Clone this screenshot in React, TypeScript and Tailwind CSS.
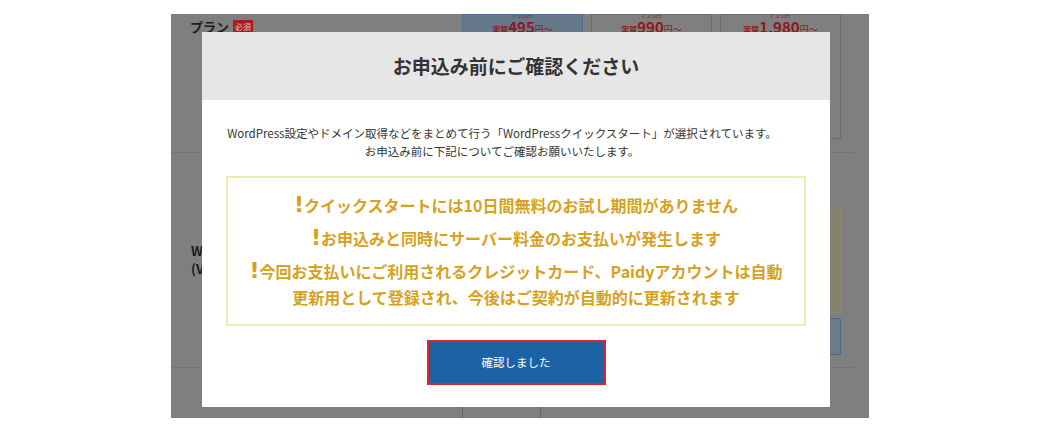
import React from "react";

const notices = [
    ["クイックスタートには10日間無料のお試し期間がありません"],
    ["お申込みと同時にサーバー料金のお支払いが発生します"],
    ["今回お支払いにご利用されるクレジットカード、Paidyアカウントは自動", "更新用として登録され、今後はご契約が自動的に更新されます"],
];

const plans = [
    { price: "495", selected: true },
    { price: "990", selected: false },
    { price: "1,980", selected: false },
];

function PlanCard({ price, selected }: { price: string; selected: boolean }) {
    return (
        <div
            className={`flex h-[125px] w-[121px] flex-col items-center overflow-hidden border ${
                selected ? "border-[#4d6d93] bg-[#66778a]" : "border-[#6c6c6c] bg-[#7f7f7f]"
            }`}
        >
            <div className="h-[4px] overflow-hidden">
                <p className="-mt-[8px] text-[10px] leading-[12px] text-[#8e3030]">・・ 月額 ・・</p>
            </div>
            <p className="flex items-baseline text-[#921818]">
                <span className="text-[8px] font-bold">実質</span>
                <span className="text-[15px] font-bold leading-[16px]">{price}</span>
                <span className="text-[9px]">円～</span>
            </p>
        </div>
    );
}

export default function App() {
    return (
        <div className="h-[432px] w-[1037px] bg-white pl-[171px] pt-[14px] font-['Noto_Sans_CJK_JP','Noto_Sans',sans-serif]">
            <div className="relative h-[404px] w-[698px] overflow-hidden bg-[#7f7f7f]">
                {/* page behind the dialog */}
                <div className="flex flex-col">
                    <div className="flex">
                        <div className="flex w-[291px] items-start gap-[4px] pl-[19px] pt-[6px]">
                            <span className="text-[13px] font-bold leading-[14px] text-[#1e1e1e]">プラン</span>
                            <span className="bg-[#a81c1c] px-[2px] text-[8px] leading-[13px] text-[#e0c4c4]">必須</span>
                        </div>
                        <div className="flex gap-[8px]">
                            {plans.map((plan) => (
                                <PlanCard key={plan.price} price={plan.price} selected={plan.selected} />
                            ))}
                        </div>
                    </div>
                    <div className="mt-[13px] h-px w-[683px] bg-[#737373]" />
                    <div className="flex h-[214px]">
                        <div className="ml-[20px] mt-[89px] w-[11px] overflow-hidden whitespace-nowrap text-[13px] font-bold leading-[18px] text-[#1a1a1a]">
                            <p>W</p>
                            <p>(V</p>
                        </div>
                        <div className="ml-auto mr-[28px] flex w-[300px] flex-col pt-[56px]">
                            <div className="h-[104px] border border-[#8b896b] bg-[#84826f]" />
                            <div className="mt-[5px] h-[37px] rounded-[2px] border border-[#46668f] bg-[#6e7a88]" />
                        </div>
                    </div>
                    <div className="h-px w-[683px] bg-[#737373]" />
                    <div className="ml-[291px] mt-[38px] h-[14px] w-[79px] rounded-[2px] border border-[#666666]" />
                </div>

                {/* dialog */}
                <div className="absolute left-[31px] top-[18px] flex w-[628px] flex-col bg-white">
                    <div className="flex h-[68px] items-center justify-center bg-[#e6e6e6]">
                        <h1 className="text-[19px] font-bold text-[#333333]">お申込み前にご確認ください</h1>
                    </div>
                    <div className="flex flex-col items-center px-[24px] pb-[22px] pt-[24px]">
                        <p className="pr-[28px] text-center text-[11.5px] leading-[18px] text-[#333333]">
                            WordPress設定やドメイン取得などをまとめて行う「WordPressクイックスタート」が選択されています。
                            <br />
                            お申込み前に下記についてご確認お願いいたします。
                        </p>
                        <div className="mt-[16px] flex h-[150px] w-full flex-col items-center justify-center gap-[7px] border-2 border-[#efeab2] text-[16px] font-bold leading-[26px] text-[#d6a21e]">
                            {notices.map((lines) => (
                                <p key={lines[0]} className="text-center">
                                    <span className="font-['DejaVu_Sans',sans-serif] text-[22px] font-bold leading-none">!</span>
                                    {lines[0]}
                                    {lines[1] ? (
                                        <>
                                            <br />
                                            {lines[1]}
                                        </>
                                    ) : null}
                                </p>
                            ))}
                        </div>
                        <button className="mt-[14px] flex h-[45px] w-[179px] items-center justify-center border-2 border-[#e3222c] bg-[#1c63a5] text-[11.5px] text-white">
                            確認しました
                        </button>
                    </div>
                </div>
            </div>
        </div>
    );
}
